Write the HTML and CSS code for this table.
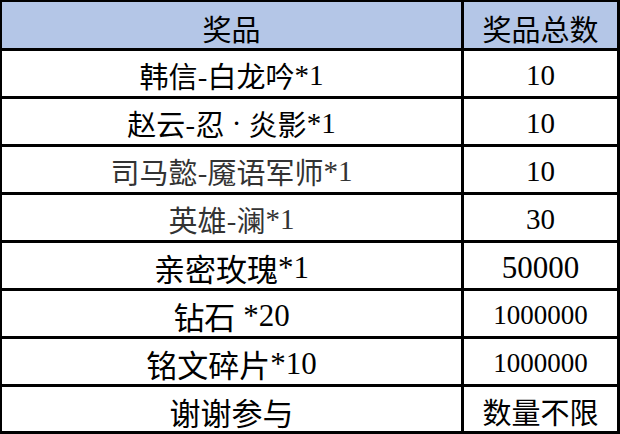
FILE: index.html
```html
<!DOCTYPE html>
<html lang="zh-CN">
<head>
<meta charset="utf-8">
<title>奖品</title>
<link rel="stylesheet" href="styles.css">
</head>
<body>
<div class="prize-table">
  <div class="cell head">奖品</div>
  <div class="cell head">奖品总数</div>

  <div class="cell name">韩信-白龙吟<span class="lat">*1</span></div>
  <div class="cell num">10</div>

  <div class="cell name">赵云-忍<span class="lat">&nbsp;·&nbsp;</span>炎影<span class="lat">*1</span></div>
  <div class="cell num">10</div>

  <div class="cell name gray">司马懿-魇语军师<span class="lat">*1</span></div>
  <div class="cell num">10</div>

  <div class="cell name gray">英雄-澜<span class="lat">*1</span></div>
  <div class="cell num">30</div>

  <div class="cell name big">亲密玫瑰<span class="lat">*1</span></div>
  <div class="cell num wide">50000</div>

  <div class="cell name big">钻石<span class="lat">&nbsp;*20</span></div>
  <div class="cell num small">1000000</div>

  <div class="cell name big">铭文碎片<span class="lat">*10</span></div>
  <div class="cell num small">1000000</div>

  <div class="cell name big">谢谢参与</div>
  <div class="cell num cjk">数量不限</div>
</div>
</body>
</html>
```

FILE: styles.css
```css
html, body {
  margin: 0;
  padding: 0;
  background: #ffffff;
}

.prize-table {
  width: 620px;
  height: 434px;
  box-sizing: border-box;
  display: grid;
  grid-template-columns: 459px 153px;
  grid-template-rows: 46px repeat(7, 45px) 44px;
  column-gap: 3px;
  row-gap: 3px;
  padding: 2px 3px 3px 2px;
  background: #000000;
}

.cell {
  background: #ffffff;
  display: flex;
  align-items: center;
  justify-content: center;
  padding-top: 4px;
  box-sizing: border-box;
  color: #000000;
  font-family: "Liberation Serif", "Noto Sans CJK SC", serif;
  font-size: 29px;
  white-space: nowrap;
  line-height: 1;
}

.head {
  background: #b4c6e7;
  font-family: "Noto Sans CJK SC", sans-serif;
  font-size: 29px;
  padding-top: 6px;
}

.name {
  font-family: "Noto Sans CJK SC", sans-serif;
  font-size: 29px;
}

.name .lat {
  font-family: "Liberation Serif", serif;
}

.gray {
  color: #333333;
}

.big {
  font-size: 31px;
}

.num {
  font-size: 29px;
}

.num.wide {
  font-size: 31px;
}

.num.small {
  font-size: 27px;
}

.num.cjk {
  font-family: "Noto Sans CJK SC", sans-serif;
  font-size: 29px;
}
```
